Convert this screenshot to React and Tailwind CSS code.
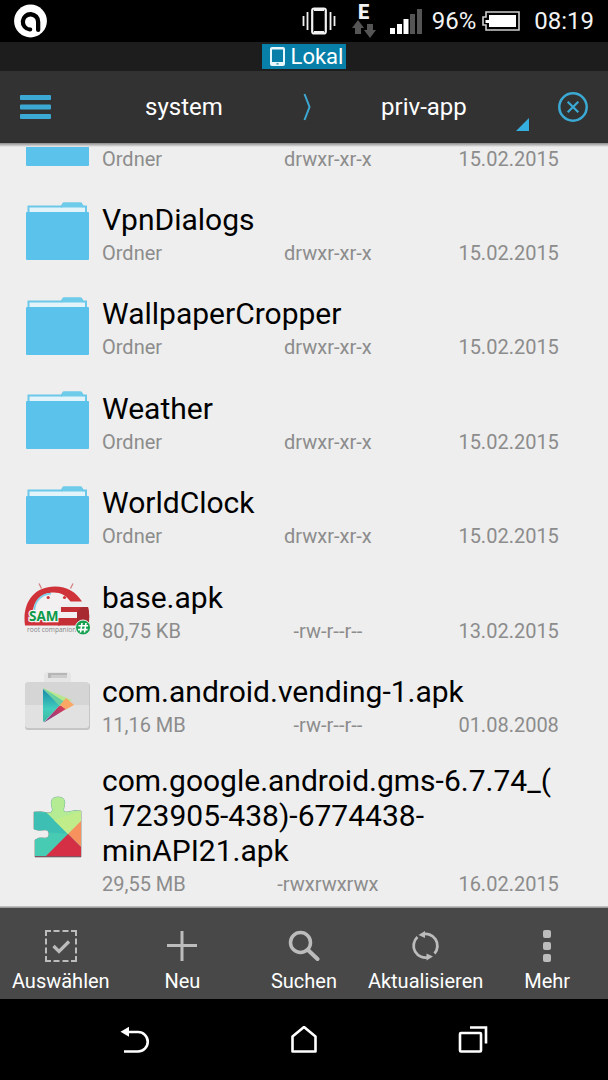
import React from "react";

const entries = [
  { name: ["VpnDialogs"], info: "Ordner", mode: "drwxr-xr-x", date: "15.02.2015" },
  { name: ["WallpaperCropper"], info: "Ordner", mode: "drwxr-xr-x", date: "15.02.2015" },
  { name: ["Weather"], info: "Ordner", mode: "drwxr-xr-x", date: "15.02.2015" },
  { name: ["WorldClock"], info: "Ordner", mode: "drwxr-xr-x", date: "15.02.2015" },
  { name: ["base.apk"], info: "80,75 KB", mode: "-rw-r--r--", date: "13.02.2015", icon: "sam" },
  { name: ["com.android.vending-1.apk"], info: "11,16 MB", mode: "-rw-r--r--", date: "01.08.2008", icon: "play" },
  {
    name: ["com.google.android.gms-6.7.74_(", "1723905-438)-6774438-", "minAPI21.apk"],
    info: "29,55 MB",
    mode: "-rwxrwxrwx",
    date: "16.02.2015",
    icon: "puzzle",
  },
];

function FolderIcon() {
  return (
    <svg width="66" height="70" viewBox="0 0 66 70" className="shrink-0" aria-hidden="true">
      <path d="M4.5 18V8.500H37.500L39.500 5.500H57L59 8.500H62V18Z" fill="#e2f3f9" stroke="#6cc8e8" strokeWidth="2" />
      <path d="M37 9.500L39.500 4.500H56.500L59.500 9.500Z" fill="#6fcbea" />
      <rect x="2" y="14" width="63" height="48" rx="1" fill="#5bc2ec" />
    </svg>
  );
}

function SamIcon() {
  return (
    <svg width="66" height="70" viewBox="0 0 66 70" className="shrink-0" aria-hidden="true">
      <path d="M15 7.500L17.500 12.500M49 7.500L46.500 12.500" stroke="#d57f82" strokeWidth="1.300" />
      <path d="M8 42C7 24 17 15.500 31 15.500C39 15.500 45 20 48 26L34 31V42Z" fill="#f3f0f1" />
      <path d="M1 49.500C-2 28 9 10.500 31 10.500C43 10.500 52 16 58 25.500H46.500C42 19.500 37 16.500 30 16.500C17 16.500 8 26 9 39V43H36V49.500Z" fill="#cf3238" />
      <path d="M10.300 35C10.500 25 17 18.200 27 17.600" fill="none" stroke="#7fd0ea" strokeWidth="1.800" />
      <path d="M36 36H53V42H36Z" fill="#f3f0f1" />
      <path d="M37 31H64C65.500 37 65.500 43 64.500 49.500H34V42H53V36H37Z" fill="#c42f36" />
      <path d="M58 31H64C65.500 37 65.500 43 64.500 49.500H53V36Z" fill="#a82a31" />
      <circle cx="24.200" cy="21.500" r="1.600" fill="#d13338" />
      <circle cx="40.500" cy="21.500" r="1.600" fill="#d13338" />
      <text x="5" y="45" fontFamily="Open Sans, sans-serif" fontWeight="700" fontSize="13.500" fill="#0d9a48" stroke="#f4f4f4" strokeWidth="2.400" paintOrder="stroke">SAM</text>
      <text x="3" y="56" fontFamily="Open Sans, sans-serif" fontWeight="400" fontSize="6.600" fill="#858585">root companion</text>
      <circle cx="59" cy="51.500" r="7.500" fill="#15a050" stroke="#f1f1f1" strokeWidth="1" />
      <path d="M58 47L56.500 56.500M62 47L60.500 56.500M54.500 49.800H64M54 53.600H63.500" stroke="#fff" strokeWidth="1.600" />
    </svg>
  );
}

function PlayIcon() {
  return (
    <svg width="66" height="70" viewBox="0 0 66 70" className="shrink-0" aria-hidden="true">
      <defs>
        <linearGradient id="blue" x1="0" y1="0" x2="0" y2="1">
          <stop offset="0" stopColor="#168ba8" />
          <stop offset="0.600" stopColor="#42cdbd" />
          <stop offset="1" stopColor="#3cb9a0" />
        </linearGradient>
        <linearGradient id="red" x1="0" y1="1" x2="1" y2="0">
          <stop offset="0" stopColor="#783d91" />
          <stop offset="1" stopColor="#e33a4d" />
        </linearGradient>
      </defs>
      <path d="M20 12V5Q20 1 24 1H43Q47 1 47 5V12" fill="#e5e5e5" />
      <rect x="24" y="2" width="19" height="5" fill="#b6b6b6" />
      <path d="M27 4H43V7H27Z" fill="#cccccc" />
      <rect x="1" y="12" width="65" height="47" rx="3" fill="#c5c5c5" />
      <path d="M1 14Q1 11 4 11H62Q65 11 65 14V34H1Z" fill="#d5d5d5" />
      <path d="M1 34H65V54Q65 57 62 57H4Q1 57 1 54Z" fill="#e1e1e1" />
      <path d="M19 18L36 34L20 51Q19 51 19 49Z" fill="url(#blue)" />
      <path d="M36 34L42 38L20 51.500Z" fill="url(#red)" />
      <path d="M19 17L48 29L36 35Z" fill="#b9e790" />
      <path d="M19 17L41 31L36 35Z" fill="#67cfa0" />
      <path d="M42 27L50 34L42 38.500L36 34Z" fill="#f9a765" />
    </svg>
  );
}

function PuzzleIcon() {
  return (
    <svg width="66" height="70" viewBox="0 0 66 70" className="shrink-0" aria-hidden="true">
      <defs>
        <clipPath id="piece">
          <path d="M10 17Q17 16 24 18Q30 18 28 12Q25 2 34 2Q43 2 40 12Q38 18 44 17Q50 15 57 16V62H11V45Q15 42 19 43Q25 44 25 39Q25 34 19 35Q14 36 10 34Z" />
        </clipPath>
      </defs>
      <path d="M10 17Q17 16 24 18Q30 18 28 12Q25 2 34 2Q43 2 40 12Q38 18 44 17Q50 15 57 16V62H11V45Q15 42 19 43Q25 44 25 39Q25 34 19 35Q14 36 10 34Z" fill="none" stroke="#8b9a92" strokeWidth="1" />
      <g clipPath="url(#piece)">
        <rect width="66" height="70" fill="#48cbb3" />
        <path d="M24 18L10 17V36L44 39Z" fill="#3dbfb4" />
        <path d="M8 0H66V18L44 39L22 17Z" fill="#b4eb93" />
        <path d="M30 25L44 39L58 26V16Z" fill="#c0ec8a" />
        <path d="M44 39L66 17V61Z" fill="#f7925f" />
        <path d="M44 39L67 62V70H13Z" fill="#d52f45" />
      </g>
      <path d="M11 61.500H57" stroke="#855060" strokeWidth="1" />
    </svg>
  );
}

const fileIcons = { sam: SamIcon, play: PlayIcon, puzzle: PuzzleIcon };

function Meta({ entry }) {
  return (
    <div className="mt-1 grid grid-cols-[3fr_4fr_4fr] text-xl leading-6 text-[#8c8c8c]">
      <span>{entry.info}</span>
      <span className="text-center">{entry.mode}</span>
      <span className="text-center">{entry.date}</span>
    </div>
  );
}

function Entry({ entry }) {
  const Icon = fileIcons[entry.icon] || FolderIcon;
  return (
    <div className="flex w-full items-center gap-3 pr-[9px] pl-6">
      <Icon />
      <div className="min-w-0 flex-1">
        <h2 className="pr-6 text-[30px] leading-[35px] text-black">
          {entry.name.map((part, i) => (
            <React.Fragment key={part}>
              {i > 0 && <wbr />}
              {part}
            </React.Fragment>
          ))}
        </h2>
        <Meta entry={entry} />
      </div>
    </div>
  );
}

/* The row that is scrolled halfway out under the header. */
function ClippedEntry({ entry }) {
  return (
    <div className="flex h-[39px] gap-3 overflow-hidden pr-[9px] pl-6">
      <svg width="66" height="19" viewBox="0 0 66 19" className="shrink-0" aria-hidden="true">
        <path d="M2 0H65V18Q65 19 64 19H3Q2 19 2 18Z" fill="#5bc2ec" />
      </svg>
      <div className="-mt-1 min-w-0 flex-1">
        <Meta entry={entry} />
      </div>
    </div>
  );
}

function StatusBar() {
  return (
    <div className="flex h-[42px] shrink-0 items-center bg-black px-3.5 text-2xl text-[#f2f2f2]">
      <svg width="33" height="34" viewBox="0 0 33 34" aria-hidden="true">
        <circle cx="16.500" cy="17" r="16.400" fill="#fff" />
        <path d="M15.500 27.500A9.800 9.800 0 1 1 26.300 18V26Q26.300 28 24.300 28Q22 28 22 26V18A5.500 5.500 0 1 0 16.500 23.500Q18.300 23.500 18.300 25.500Q18.300 27.800 15.500 27.500Z" fill="#000" />
      </svg>
      <div className="ml-auto flex items-center">
        <svg width="34" height="28" viewBox="0 0 34 28" fill="none" stroke="#f2f2f2" aria-hidden="true">
          <rect x="10.200" y="1.500" width="13.600" height="25" rx="2" strokeWidth="2.200" />
          <path d="M12 2.500H22M12 25.500H22" strokeWidth="3" />
          <path d="M5.500 5V23M28.500 5V23" strokeWidth="1.800" />
          <path d="M1.500 9V19M32.500 9V19" strokeWidth="1.800" />
        </svg>
        <div className="ml-4 flex w-6 flex-col items-center">
          <span className="text-xl leading-4 font-black">E</span>
          <svg width="24" height="18" viewBox="0 0 24 18" fill="#555" aria-hidden="true">
            <path d="M6 0L12 8H9V14H3V8H0Z" />
            <path d="M15 4H21V10H24L18 18L12 10H15Z" />
          </svg>
        </div>
        <svg className="ml-3.5" width="32" height="25" viewBox="0 0 32 25" aria-hidden="true">
          <path d="M0 19H5V25H0ZM7 15H12V25H7ZM13.500 10H18.500V25H13.500Z" fill="#fff" />
          <path d="M20 5H25V25H20ZM27 0H32V25H27Z" fill="#555" />
        </svg>
        <span className="ml-2.5">96%</span>
        <svg className="ml-1.5" width="38" height="20" viewBox="0 0 38 20" aria-hidden="true">
          <path d="M4 1H37V19H4V14H1V6H4Z" fill="none" stroke="#d0d0d0" strokeWidth="1.600" />
          <path d="M7 4H34V16H7V12H3.500V9H7Z" fill="#fff" />
        </svg>
        <span className="ml-3.5">08:19</span>
      </div>
    </div>
  );
}

function Header() {
  return (
    <header className="shrink-0 text-white">
      <div className="flex h-[29px] items-center justify-center bg-[#1d1d1d]">
        <div className="flex h-[25px] items-center gap-1.5 bg-[#087fa8] pr-[3px] pl-2 text-[22px] leading-6">
          <svg width="15" height="19" viewBox="0 0 15 19" aria-hidden="true">
            <path fillRule="evenodd" d="M2 0H13Q15 0 15 2V17Q15 19 13 19H2Q0 19 0 17V2Q0 0 2 0ZM2 2.500V15H13V2.500ZM6.500 16.300V17.600H8.500V16.300Z" fill="#e8f7fc" />
          </svg>
          Lokal
        </div>
      </div>
      <nav className="flex h-[72px] items-stretch bg-[#323232] text-2xl" aria-label="Pfad">
        <button className="w-[71px] pl-5" aria-label="Menü">
          <svg width="31" height="24" viewBox="0 0 31 24" fill="#3ba9d3" aria-hidden="true">
            <rect width="31" height="5" rx="1" />
            <rect y="9.500" width="31" height="5" rx="1" />
            <rect y="19" width="31" height="5" rx="1" />
          </svg>
        </button>
        <button className="flex-[19]">system</button>
        <svg className="w-5 self-center" height="28" viewBox="0 0 20 28" fill="none" stroke="#3ba9d3" strokeWidth="2" aria-hidden="true">
          <path d="M7.500 1L12.500 14L7.500 27" />
        </svg>
        <button className="relative flex-[18]">
          priv-app
          <svg className="absolute right-0.5 bottom-3" width="13" height="13" viewBox="0 0 13 13" aria-hidden="true">
            <path d="M13 0V13H0Z" fill="#35afe0" />
          </svg>
        </button>
        <button className="flex w-[77px] items-center justify-end pr-5" aria-label="Schließen">
          <svg width="30" height="30" viewBox="0 0 30 30" fill="none" stroke="#3ba9d3" aria-hidden="true">
            <circle cx="15" cy="15" r="13.700" strokeWidth="2.500" />
            <path d="M9.700 9.700L20.300 20.300M20.300 9.700L9.700 20.300" strokeWidth="2.200" />
          </svg>
        </button>
      </nav>
    </header>
  );
}

const actions = [
  {
    label: "Auswählen",
    icon: (
      <g stroke="#bcbcbc" fill="none">
        <path d="M1 6V1H6M26 1H31V6M31 26V31H26M6 31H1V26M8.500 1H14.500M17.500 1H23.500M8.500 31H14.500M17.500 31H23.500M1 8.500V14.500M1 17.500V23.500M31 8.500V14.500M31 17.500V23.500" strokeWidth="2" />
        <path d="M8.500 16L14 21.500L24 11.500" strokeWidth="3.200" />
      </g>
    ),
  },
  { label: "Neu", icon: <path d="M16 1V31M1 15.500H31" stroke="#bcbcbc" strokeWidth="3" /> },
  {
    label: "Suchen",
    icon: (
      <g stroke="#bcbcbc" fill="none" strokeLinecap="round">
        <circle cx="12.500" cy="12.500" r="10" strokeWidth="3.500" />
        <path d="M20 20L29.500 29" strokeWidth="4" />
      </g>
    ),
  },
  {
    label: "Aktualisieren",
    icon: (
      <g stroke="#bcbcbc" fill="none" strokeWidth="2.800">
        <path d="M12 4.500A11.800 11.800 0 0 1 24.500 23.500" />
        <path d="M7.500 7A11.800 11.800 0 0 0 19 27" />
        <path d="M8.500 5L15 1V8ZM23 26.500L16.500 30.500V23.500Z" fill="#bcbcbc" stroke="none" />
      </g>
    ),
  },
  {
    label: "Mehr",
    icon: (
      <g fill="#bcbcbc">
        <rect x="12" y="0" width="8" height="8" rx="2" />
        <rect x="12" y="12" width="8" height="8" rx="2" />
        <rect x="12" y="24" width="8" height="8" rx="2" />
      </g>
    ),
  },
];

function Toolbar() {
  return (
    <div className="grid h-[91px] shrink-0 grid-cols-5 bg-[#484848]" role="toolbar">
      {actions.map((a) => (
        <button key={a.label} className="flex flex-col items-center pt-[22px] text-xl leading-6 text-white">
          <svg width="32" height="32" viewBox="0 0 32 32" aria-hidden="true">{a.icon}</svg>
          <span className="mt-[7px]">{a.label}</span>
        </button>
      ))}
    </div>
  );
}

const navButtons = [
  {
    label: "Zurück",
    icon: (
      <>
        <path d="M8 6H18A9.700 9.700 0 0 1 18 25.500H4" />
        <path d="M0.500 5.800L9 0.800V10.800Z" fill="#fff" stroke="none" />
      </>
    ),
  },
  { label: "Startseite", icon: <path d="M3.500 25.500V10.500L15 1L26.500 10.500V25.500Z" strokeLinejoin="round" /> },
  {
    label: "Letzte Apps",
    icon: (
      <>
        <rect x="2" y="7" width="21" height="18.500" rx="1" />
        <path d="M12 1.500H28V17.500" />
      </>
    ),
  },
];

function NavigationBar() {
  return (
    <div className="flex h-[81px] shrink-0 bg-black px-[51px]">
      {navButtons.map((b) => (
        <button key={b.label} className="flex flex-1 items-center justify-center" aria-label={b.label}>
          <svg width="30" height="28" viewBox="0 0 30 28" fill="none" stroke="#fff" strokeWidth="2.600" aria-hidden="true">
            {b.icon}
          </svg>
        </button>
      ))}
    </div>
  );
}

export default function App() {
  return (
    <div className="flex min-h-screen flex-col bg-[#eeeeee] font-['Roboto',sans-serif]">
      <StatusBar />
      <Header />
      <div className="h-1 shrink-0 bg-linear-to-b from-[#8c8c8c] to-[#eeeeee]" />
      <main className="flex flex-1 flex-col">
        <ul className="flex flex-1 flex-col">
          <li>
            <ClippedEntry entry={{ info: "Ordner", mode: "drwxr-xr-x", date: "15.02.2015" }} />
          </li>
          {entries.slice(0, -1).map((e) => (
            <li key={e.name[0]} className="flex flex-1 items-center">
              <Entry entry={e} />
            </li>
          ))}
          <li className="flex items-center py-2.5">
            <Entry entry={entries[entries.length - 1]} />
          </li>
        </ul>
      </main>
      <div className="h-0.5 shrink-0 bg-linear-to-b from-[#d0d0d0] to-[#8c8c8c]" />
      <Toolbar />
      <NavigationBar />
    </div>
  );
}
